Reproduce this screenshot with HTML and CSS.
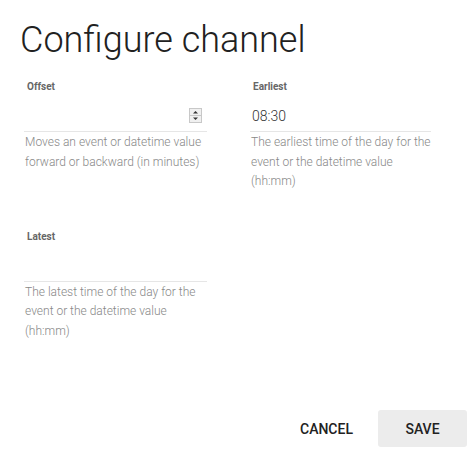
FILE: index.html
```html
<!DOCTYPE html>
<html lang="en">
<head>
  <title>Configure channel</title>
  <meta name="viewport" content="width=device-width, initial-scale=1">
  <meta charset="UTF-8">
  <link rel="stylesheet" href="styles.css">
</head>
<body>
  <div class="dialog">
    <h1 class="title">Configure channel</h1>

    <div class="fields">
      <div class="field">
        <label class="field-label">Offset</label>
        <div class="field-input">
          <span class="value"></span>
          <span class="spinner">
            <svg width="13" height="15" viewBox="0 0 13 15">
              <rect x="0.5" y="0.5" width="12" height="14" fill="#f0f0f0" stroke="#c8c8c8"/>
              <line x1="1" y1="7.5" x2="12" y2="7.5" stroke="#c8c8c8"/>
              <path d="M4 5.5 L6.5 3 L9 5.5 Z" fill="#333"/>
              <path d="M4 9.5 L6.5 12 L9 9.5 Z" fill="#333"/>
            </svg>
          </span>
        </div>
        <div class="field-help">Moves an event or datetime value forward or backward (in minutes)</div>
      </div>

      <div class="field">
        <label class="field-label">Earliest</label>
        <div class="field-input">
          <span class="value">08:30</span>
        </div>
        <div class="field-help">The earliest time of the day for the event or the datetime value (hh:mm)</div>
      </div>

      <div class="field">
        <label class="field-label">Latest</label>
        <div class="field-input">
          <span class="value"></span>
        </div>
        <div class="field-help">The latest time of the day for the event or the datetime value (hh:mm)</div>
      </div>
    </div>

    <div class="actions">
      <button class="btn">CANCEL</button>
      <button class="btn btn-primary">SAVE</button>
    </div>
  </div>
</body>
</html>
```

FILE: styles.css
```css
body {
  font-family: Roboto, 'Liberation Sans', Arial, sans-serif;
  margin: 0;
  padding: 0;
  background: white;
}
.dialog {
  width: 472px;
  height: 454px;
  display: flex;
  flex-direction: column;
}
.title {
  font-size: 36px;
  font-weight: 300;
  line-height: 44px;
  color: #212121;
  margin: 18px 0 0 20px;
}
.fields {
  display: grid;
  grid-template-columns: 183px 181px;
  column-gap: 43px;
  row-gap: 38px;
  margin: 18px 0 0 24px;
  align-items: start;
}
.field-label {
  display: block;
  font-size: 10px;
  font-weight: 700;
  line-height: 14px;
  color: #666;
  padding-left: 3px;
}
.field-input {
  display: flex;
  align-items: center;
  justify-content: space-between;
  height: 25px;
  margin-top: 12px;
  border-bottom: 1px solid #e6e6e6;
}
.value {
  font-size: 14px;
  font-weight: 300;
  line-height: 20px;
  color: #333;
  padding-left: 2px;
  margin-bottom: 5px;
}
.spinner {
  display: flex;
  margin: 0 5px 6px 0;
}
.field-help {
  font-size: 12px;
  font-weight: 300;
  line-height: 19.5px;
  color: #888;
  margin-top: 1px;
  padding-left: 1px;
}
.actions {
  margin-top: auto;
  display: flex;
  justify-content: flex-end;
  gap: 7px;
  padding: 0 5px 7px 0;
}
.btn {
  width: 89px;
  height: 37px;
  border: none;
  border-radius: 3px;
  background: none;
  font-family: Roboto, 'Liberation Sans', Arial, sans-serif;
  font-size: 14px;
  font-weight: 500;
  color: #222;
}
.btn-primary {
  background: #ececec;
}
```
